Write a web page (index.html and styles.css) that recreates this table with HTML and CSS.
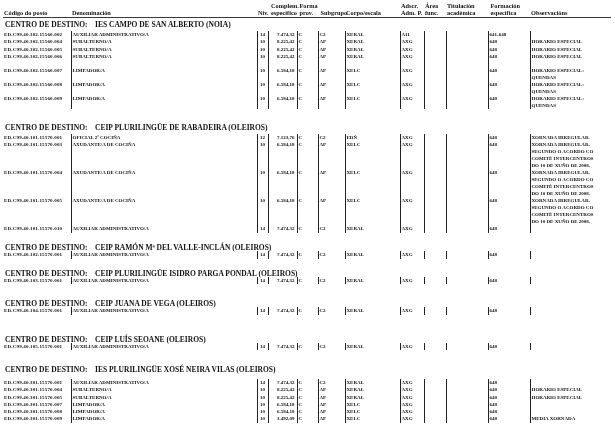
FILE: index.html
```html
<!DOCTYPE html>
<html lang="gl">
<head>
<meta charset="utf-8">
<title>Postos</title>
<link rel="stylesheet" href="styles.css">
</head>
<body>
<table class="grid">
  <colgroup>
    <col class="w-code"><col class="w-den"><col class="w-niv"><col class="w-comp"><col class="w-forma"><col class="w-sub"><col class="w-corpo"><col class="w-adscr"><col class="w-area"><col class="w-tit"><col class="w-form"><col class="w-obs">
  </colgroup>
  <thead>
    <tr class="hdr">
      <th>Código do posto</th>
      <th>Denominación</th>
      <th class="h-niv">Niv.</th>
      <th class="h-comp">Complem.<br>específico</th>
      <th class="h-pad">Forma<br>prov.</th>
      <th class="h-pad">Subgrupo</th>
      <th>Corpo/escala</th>
      <th>Adscr.<br>Adm. P.</th>
      <th>Área<br>func.</th>
      <th>Titulación<br>académica</th>
      <th class="h-pad">Formación<br>específica</th>
      <th>Observacións</th>
    </tr>
  </thead>

  <tbody>
    <tr class="sec s1"><td colspan="12"><span class="lbl">CENTRO DE DESTINO:</span>IES CAMPO DE SAN ALBERTO (NOIA)</td></tr>
    <tr class="row"><td class="c">ED.C99.40.302.15560.002</td><td class="r">AUXILIAR ADMINISTRATIVO/A</td><td class="r n">14</td><td class="r v">7.474,32</td><td class="r">C</td><td class="r">C2</td><td class="r">XERAL</td><td class="r">A11</td><td class="r"></td><td class="r"></td><td class="r">641-648</td><td class="r"></td></tr>
    <tr class="row"><td class="c">ED.C99.40.302.15560.004</td><td class="r">SUBALTERNO/A</td><td class="r n">10</td><td class="r v">8.225,42</td><td class="r">C</td><td class="r">AP</td><td class="r">XERAL</td><td class="r">AXG</td><td class="r"></td><td class="r"></td><td class="r">648</td><td class="r">HORARIO ESPECIAL</td></tr>
    <tr class="row"><td class="c">ED.C99.40.302.15560.005</td><td class="r">SUBALTERNO/A</td><td class="r n">10</td><td class="r v">8.225,42</td><td class="r">C</td><td class="r">AP</td><td class="r">XERAL</td><td class="r">AXG</td><td class="r"></td><td class="r"></td><td class="r">648</td><td class="r">HORARIO ESPECIAL</td></tr>
    <tr class="row"><td class="c">ED.C99.40.302.15560.006</td><td class="r">SUBALTERNO/A</td><td class="r n">10</td><td class="r v">8.225,42</td><td class="r">C</td><td class="r">AP</td><td class="r">XERAL</td><td class="r">AXG</td><td class="r"></td><td class="r"></td><td class="r">648</td><td class="r">HORARIO ESPECIAL</td></tr>
    <tr class="row pre"><td class="c">ED.C99.40.302.15560.007</td><td class="r">LIMPADOR/A</td><td class="r n">10</td><td class="r v">6.584,18</td><td class="r">C</td><td class="r">AP</td><td class="r">XELC</td><td class="r">AXG</td><td class="r"></td><td class="r"></td><td class="r">648</td><td class="r ml">HORARIO ESPECIAL:<br>QUENDAS</td></tr>
    <tr class="row"><td class="c">ED.C99.40.302.15560.008</td><td class="r">LIMPADOR/A</td><td class="r n">10</td><td class="r v">6.584,18</td><td class="r">C</td><td class="r">AP</td><td class="r">XELC</td><td class="r">AXG</td><td class="r"></td><td class="r"></td><td class="r">648</td><td class="r ml">HORARIO ESPECIAL:<br>QUENDAS</td></tr>
    <tr class="row"><td class="c">ED.C99.40.302.15560.009</td><td class="r">LIMPADOR/A</td><td class="r n">10</td><td class="r v">6.584,18</td><td class="r">C</td><td class="r">AP</td><td class="r">XELC</td><td class="r">AXG</td><td class="r"></td><td class="r"></td><td class="r">648</td><td class="r ml">HORARIO ESPECIAL:<br>QUENDAS</td></tr>
  </tbody>

  <tbody>
    <tr class="sec s2"><td colspan="12"><span class="lbl">CENTRO DE DESTINO:</span>CEIP PLURILINGÜE DE RABADEIRA (OLEIROS)</td></tr>
    <tr class="row"><td class="c">ED.C99.40.101.15570.001</td><td class="r">OFICIAL 2ª COCIÑA</td><td class="r n">12</td><td class="r v">7.123,76</td><td class="r">C</td><td class="r">C2</td><td class="r">EDÑ</td><td class="r">AXG</td><td class="r"></td><td class="r"></td><td class="r">648</td><td class="r">XORNADA IRREGULAR.</td></tr>
    <tr class="row"><td class="c">ED.C99.40.101.15570.003</td><td class="r">AXUDANTE/A DE COCIÑA</td><td class="r n">10</td><td class="r v">6.584,18</td><td class="r">C</td><td class="r">AP</td><td class="r">XELC</td><td class="r">AXG</td><td class="r"></td><td class="r"></td><td class="r">648</td><td class="r ml">XORNADA IRREGULAR,<br>SEGUNDO O ACORDO CO<br>COMITÉ INTERCENTROS<br>DO 10 DE XUÑO DE 2008.</td></tr>
    <tr class="row"><td class="c">ED.C99.40.101.15570.004</td><td class="r">AXUDANTE/A DE COCIÑA</td><td class="r n">10</td><td class="r v">6.584,18</td><td class="r">C</td><td class="r">AP</td><td class="r">XELC</td><td class="r">AXG</td><td class="r"></td><td class="r"></td><td class="r">648</td><td class="r ml">XORNADA IRREGULAR,<br>SEGUNDO O ACORDO CO<br>COMITÉ INTERCENTROS<br>DO 10 DE XUÑO DE 2008.</td></tr>
    <tr class="row"><td class="c">ED.C99.40.101.15570.005</td><td class="r">AXUDANTE/A DE COCIÑA</td><td class="r n">10</td><td class="r v">6.584,18</td><td class="r">C</td><td class="r">AP</td><td class="r">XELC</td><td class="r">AXG</td><td class="r"></td><td class="r"></td><td class="r">648</td><td class="r ml">XORNADA IRREGULAR,<br>SEGUNDO O ACORDO CO<br>COMITÉ INTERCENTROS<br>DO 10 DE XUÑO DE 2008.</td></tr>
    <tr class="row"><td class="c">ED.C99.40.101.15570.010</td><td class="r">AUXILIAR ADMINISTRATIVO/A</td><td class="r n">14</td><td class="r v">7.474,32</td><td class="r">C</td><td class="r">C2</td><td class="r">XERAL</td><td class="r">AXG</td><td class="r"></td><td class="r"></td><td class="r">648</td><td class="r"></td></tr>
  </tbody>

  <tbody>
    <tr class="sec"><td colspan="12"><span class="lbl">CENTRO DE DESTINO:</span>CEIP RAMÓN Mª DEL VALLE-INCLÁN (OLEIROS)</td></tr>
    <tr class="row"><td class="c">ED.C99.40.102.15570.001</td><td class="r">AUXILIAR ADMINISTRATIVO/A</td><td class="r n">14</td><td class="r v">7.474,32</td><td class="r">C</td><td class="r">C2</td><td class="r">XERAL</td><td class="r">AXG</td><td class="r"></td><td class="r"></td><td class="r">648</td><td class="r"></td></tr>
  </tbody>

  <tbody>
    <tr class="sec"><td colspan="12"><span class="lbl">CENTRO DE DESTINO:</span>CEIP PLURILINGÜE ISIDRO PARGA PONDAL (OLEIROS)</td></tr>
    <tr class="row"><td class="c">ED.C99.40.103.15570.001</td><td class="r">AUXILIAR ADMINISTRATIVO/A</td><td class="r n">14</td><td class="r v">7.474,32</td><td class="r">C</td><td class="r">C2</td><td class="r">XERAL</td><td class="r">AXG</td><td class="r"></td><td class="r"></td><td class="r">648</td><td class="r"></td></tr>
  </tbody>

  <tbody>
    <tr class="sec gap-l"><td colspan="12"><span class="lbl">CENTRO DE DESTINO:</span>CEIP JUANA DE VEGA (OLEIROS)</td></tr>
    <tr class="row"><td class="c">ED.C99.40.104.15570.001</td><td class="r">AUXILIAR ADMINISTRATIVO/A</td><td class="r n">14</td><td class="r v">7.474,32</td><td class="r">C</td><td class="r">C2</td><td class="r">XERAL</td><td class="r">AXG</td><td class="r"></td><td class="r"></td><td class="r">648</td><td class="r"></td></tr>
  </tbody>

  <tbody>
    <tr class="sec gap-xl"><td colspan="12"><span class="lbl">CENTRO DE DESTINO:</span>CEIP LUÍS SEOANE (OLEIROS)</td></tr>
    <tr class="row"><td class="c">ED.C99.40.105.15570.001</td><td class="r">AUXILIAR ADMINISTRATIVO/A</td><td class="r n">14</td><td class="r v">7.474,32</td><td class="r">C</td><td class="r">C2</td><td class="r">XERAL</td><td class="r">AXG</td><td class="r"></td><td class="r"></td><td class="r">648</td><td class="r"></td></tr>
  </tbody>

  <tbody>
    <tr class="sec gap-l s7"><td colspan="12"><span class="lbl">CENTRO DE DESTINO:</span>IES PLURILINGÜE XOSÉ NEIRA VILAS (OLEIROS)</td></tr>
    <tr class="row"><td class="c">ED.C99.40.301.15570.001</td><td class="r">AUXILIAR ADMINISTRATIVO/A</td><td class="r n">14</td><td class="r v">7.474,32</td><td class="r">C</td><td class="r">C2</td><td class="r">XERAL</td><td class="r">AXG</td><td class="r"></td><td class="r"></td><td class="r">648</td><td class="r"></td></tr>
    <tr class="row"><td class="c">ED.C99.40.301.15570.004</td><td class="r">SUBALTERNO/A</td><td class="r n">10</td><td class="r v">8.225,42</td><td class="r">C</td><td class="r">AP</td><td class="r">XERAL</td><td class="r">AXG</td><td class="r"></td><td class="r"></td><td class="r">648</td><td class="r">HORARIO ESPECIAL</td></tr>
    <tr class="row"><td class="c">ED.C99.40.301.15570.005</td><td class="r">SUBALTERNO/A</td><td class="r n">10</td><td class="r v">8.225,42</td><td class="r">C</td><td class="r">AP</td><td class="r">XERAL</td><td class="r">AXG</td><td class="r"></td><td class="r"></td><td class="r">648</td><td class="r">HORARIO ESPECIAL</td></tr>
    <tr class="row"><td class="c">ED.C99.40.301.15570.007</td><td class="r">LIMPADOR/A</td><td class="r n">10</td><td class="r v">6.584,18</td><td class="r">C</td><td class="r">AP</td><td class="r">XELC</td><td class="r">AXG</td><td class="r"></td><td class="r"></td><td class="r">648</td><td class="r"></td></tr>
    <tr class="row"><td class="c">ED.C99.40.301.15570.008</td><td class="r">LIMPADOR/A</td><td class="r n">10</td><td class="r v">6.584,18</td><td class="r">C</td><td class="r">AP</td><td class="r">XELC</td><td class="r">AXG</td><td class="r"></td><td class="r"></td><td class="r">648</td><td class="r"></td></tr>
    <tr class="row"><td class="c">ED.C99.40.301.15570.009</td><td class="r">LIMPADOR/A</td><td class="r n">10</td><td class="r v">3.492,09</td><td class="r">C</td><td class="r">AP</td><td class="r">XELC</td><td class="r">AXG</td><td class="r"></td><td class="r"></td><td class="r">648</td><td class="r">MEDIA XORNADA</td></tr>
  </tbody>
</table>
</body>
</html>
```
FILE: styles.css
```css
html, body {
  margin: 0;
  padding: 0;
  background: #ffffff;
}

body {
  font-family: "Liberation Serif", "Times New Roman", serif;
  font-weight: bold;
  color: #111111;
}

.grid {
  margin-left: 3px;
  width: 608px;
  table-layout: fixed;
  border-collapse: collapse;
  border-spacing: 0;
  filter: grayscale(1);
}

.w-code { width: 68px; }
.w-den { width: 186px; }
.w-niv { width: 11px; }
.w-comp { width: 29px; }
.w-forma { width: 21px; }
.w-sub { width: 27px; }
.w-corpo { width: 55px; }
.w-adscr { width: 24px; }
.w-area { width: 22px; }
.w-tit { width: 42px; }
.w-form { width: 42px; }
.w-obs { width: 81px; }

/* header */
.hdr th {
  font-size: 6.3px;
  line-height: 7.5px;
  font-weight: bold;
  text-align: left;
  vertical-align: bottom;
  white-space: nowrap;
  padding: 1.5px 0 0 1px;
  border-bottom: 1px solid #3a3a3a;
  overflow: visible;
}

.hdr .h-comp {
  padding-left: 3px;
}

.hdr .h-pad {
  padding-left: 2.5px;
}

/* section headings */
.sec td {
  font-size: 7.5px;
  line-height: 6px;
  padding: 12.5px 0 0 2px;
  white-space: nowrap;
  overflow: visible;
}

.sec.s1 td {
  padding-top: 4.5px;
  padding-bottom: 3px;
}

.sec.s2 td {
  padding-top: 16px;
  padding-bottom: 3px;
}

.sec.gap-l td {
  padding-top: 17px;
}

.sec.gap-xl td {
  padding-top: 22px;
}

.sec.s7 td {
  padding-bottom: 6px;
}

.lbl {
  display: inline-block;
  width: 90px;
}

/* data rows */
.row td {
  font-size: 5px;
  line-height: 7.3px;
  padding: 0 0 0 1px;
  vertical-align: top;
  white-space: nowrap;
  overflow: visible;
}

.row.pre td {
  padding-top: 7px;
}

.row .c {
  padding-left: 1px;
  letter-spacing: 0.17px;
}

.row .r {
  border-left: 1px solid #222222;
}

.row .n {
  text-align: center;
  padding-left: 0;
}

.row .v {
  text-align: right;
  padding-right: 2px;
}

.row .ml {
  line-height: 7px;
}
```
